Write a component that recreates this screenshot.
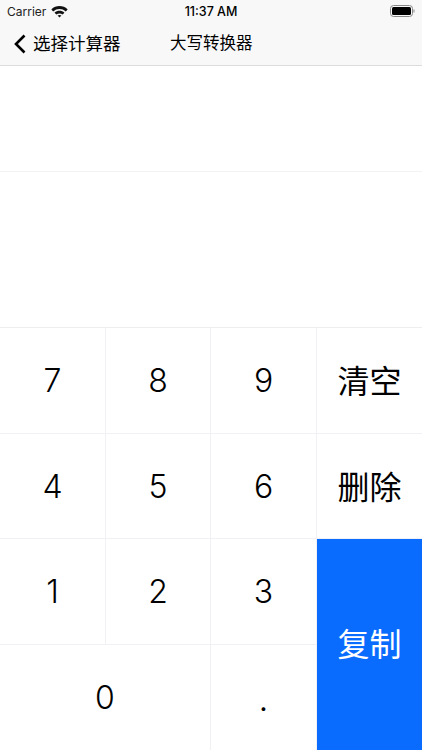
<style>
	:global(body) {
		background: #fff;
	}
	.page {
		width: 422px;
		height: 750px;
		display: flex;
		flex-direction: column;
		overflow: hidden;
		font-family: Inter, "Noto Sans CJK SC", sans-serif;
		color: #000;
	}
	.top {
		flex: none;
		height: 66px;
		box-sizing: border-box;
		background: #f8f8f8;
		border-bottom: 1px solid #dcdcdc;
	}
	.status {
		height: 22px;
		display: grid;
		grid-template-columns: 1fr auto 1fr;
		align-items: center;
		padding: 0 7px;
		font-size: 12px;
	}
	.carrier {
		display: flex;
		align-items: center;
		gap: 5px;
		color: #222;
	}
	.time {
		font-weight: 500;
		font-size: 12.5px;
	}
	.battery {
		justify-self: end;
		display: flex;
		align-items: center;
	}
	.nav {
		height: 43px;
		display: flex;
		align-items: center;
		line-height: 1;
	}
	.back {
		display: flex;
		align-items: center;
		margin-left: 13px;
		gap: 7px;
		width: 157px;
		font-size: 17.5px;
	}
	.title {
		font-size: 16.5px;
	}
	.display {
		flex: none;
		height: 261px;
	}
	.line {
		height: 105px;
		border-bottom: 1px solid #f3f3f6;
	}
	.keys {
		flex: none;
		display: grid;
		grid-template-columns: 106px 105px 106px 105px;
		grid-template-rows: 106px 105px 106px 105px;
		border-top: 1px solid #eeeef1;
	}
	button {
		all: unset;
		display: flex;
		align-items: center;
		justify-content: center;
		box-sizing: border-box;
		border-right: 1px solid #f1f1f5;
		border-bottom: 1px solid #f1f1f5;
		font-size: 32px;
		font-weight: 350;
	}
	.text {
		border-right: 0;
		padding-bottom: 3px;
		font-weight: 400;
	}
	.last {
		border-bottom: 0;
	}
	.zero {
		grid-column: span 2;
	}
	.dot {
		padding-top: 7px;
		font-size: 26px;
		font-weight: 500;
	}
	.copy {
		grid-column: 4;
		grid-row: 3 / span 2;
		padding-bottom: 5px;
		background: #0a6cff;
		color: #fff;
		border: 0;
		font-weight: 400;
	}
</style>

<div class="page">
	<div class="top">
		<div class="status">
			<div class="carrier">
				Carrier
				<svg width="17" height="13" viewBox="0 0 16 12">
					<path d="M0.3 4C4.6 -0.1 11.4 -0.1 15.7 4L13.9 6C10.6 2.9 5.4 2.9 2.1 6Z" fill="#111" />
					<path d="M3.3 7.1C6 4.6 10 4.6 12.7 7.1L10.9 8.9C9.2 7.4 6.8 7.4 5.1 8.9Z" fill="#111" />
					<path d="M6.2 9.8C7.2 9 8.8 9 9.8 9.8L8 11.7Z" fill="#111" />
				</svg>
			</div>
			<div class="time">11:37 AM</div>
			<div class="battery">
				<svg width="25" height="12" viewBox="0 0 25 12">
					<rect x="0.5" y="0.5" width="22" height="11" rx="3" fill="none" stroke="#888" />
					<rect x="2" y="2" width="19" height="8" rx="1.5" fill="#000" />
					<rect x="23.5" y="4.5" width="1" height="3" fill="#888" />
				</svg>
			</div>
		</div>
		<div class="nav">
			<div class="back">
				<svg width="13" height="20" viewBox="0 0 13 20">
					<path d="M11.5 1.5L3 10L11.5 18.5" fill="none" stroke="#000" stroke-width="2.6" />
				</svg>
				选择计算器
			</div>
			<div class="title">大写转换器</div>
		</div>
	</div>

	<div class="display">
		<div class="line"></div>
	</div>

	<div class="keys">
		<button>7</button>
		<button>8</button>
		<button>9</button>
		<button class="text">清空</button>
		<button>4</button>
		<button>5</button>
		<button>6</button>
		<button class="text">删除</button>
		<button>1</button>
		<button>2</button>
		<button>3</button>
		<button class="copy">复制</button>
		<button class="zero last">0</button>
		<button class="dot last">.</button>
	</div>
</div>
